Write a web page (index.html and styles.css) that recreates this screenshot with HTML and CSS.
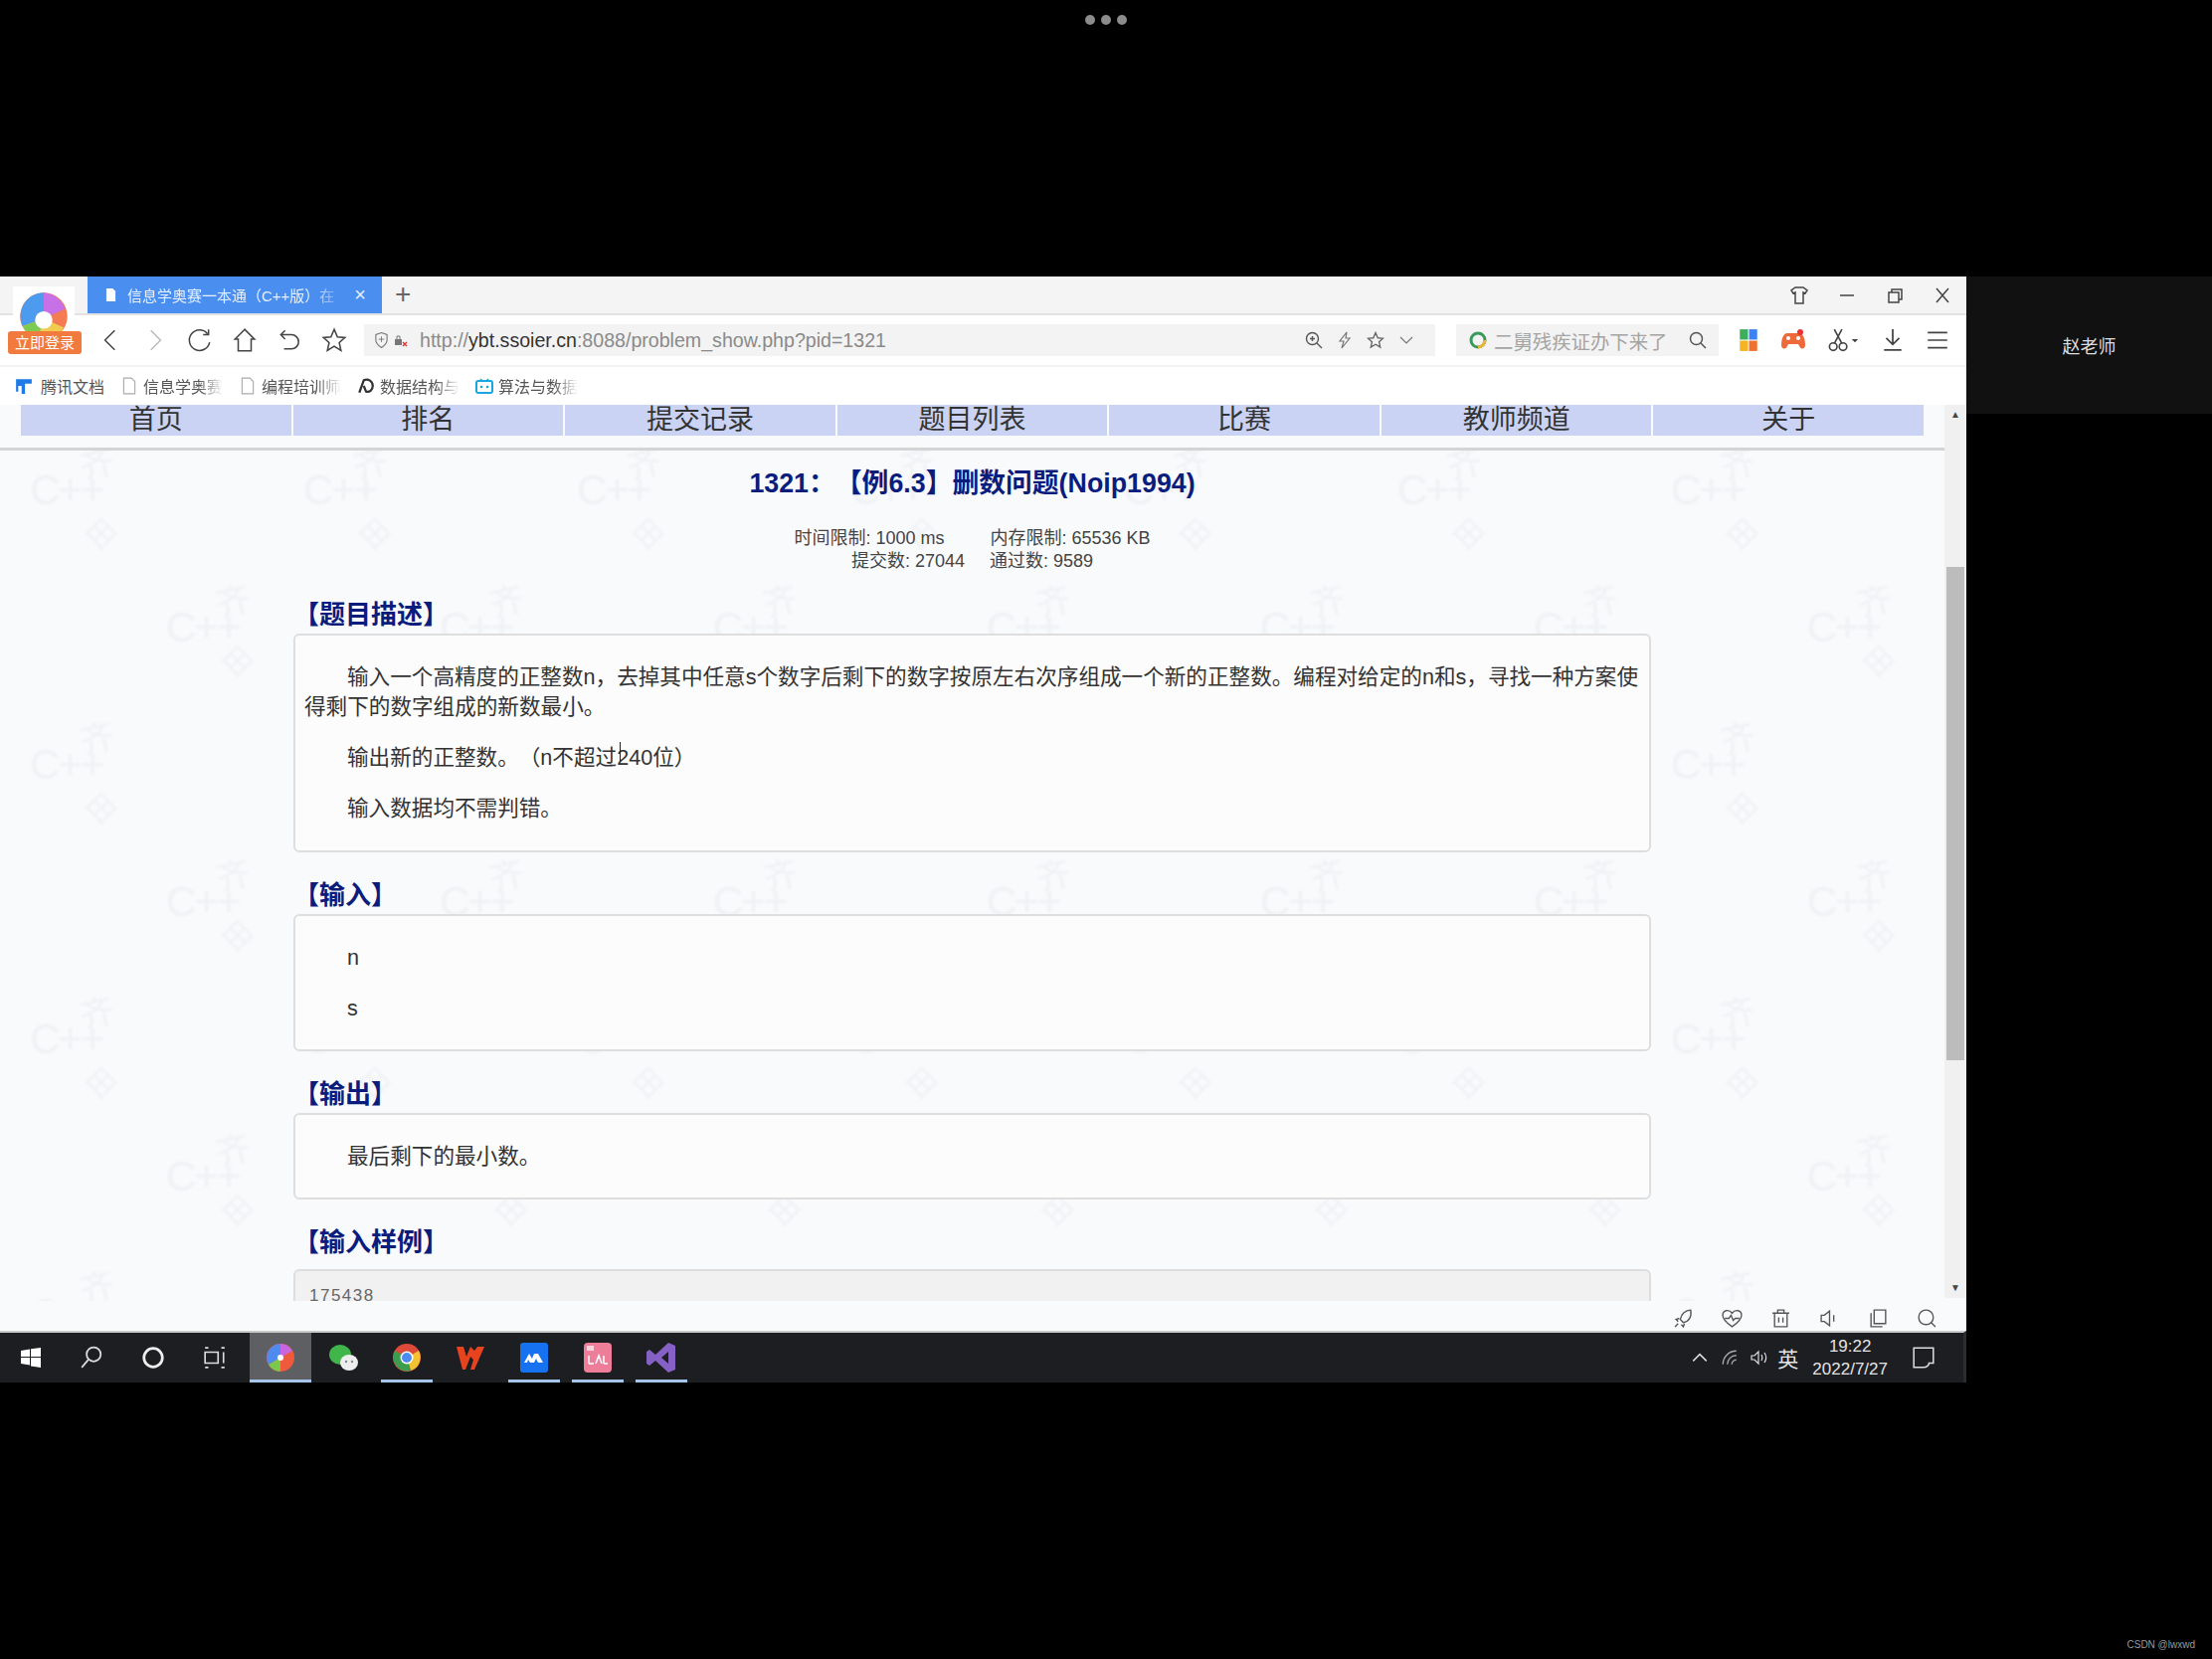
FILE: index.html
```html
<!DOCTYPE html>
<html>
<head>
    <title>1321 删数问题</title>
    <meta charset="UTF-8">
    <link rel="stylesheet" href="styles.css">
</head>
<body>
    <div class="dots"><span></span><span></span><span></span></div>

    <div class="share">
        <div class="window">
            <div class="tabbar">
                <div class="logo-space"></div>
                <div class="tab">
                    <svg class="tab-doc" viewBox="0 0 12 14"><path d="M1 0h7l3 3v11H1z" fill="#fff"/></svg>
                    <span class="tab-title">信息学奥赛一本通（C++版）在</span>
                    <span class="tab-close">×</span>
                </div>
                <span class="tab-new">+</span>
                <div class="win-btns">
                    <svg viewBox="0 0 20 20"><path d="M6 2h8l4 3-2 3-2-1v11H6V7L4 8 2 5z" fill="none" stroke="#444" stroke-width="1.5"/></svg>
                    <svg viewBox="0 0 20 20"><path d="M3 10h14" stroke="#444" stroke-width="1.5"/></svg>
                    <svg viewBox="0 0 20 20"><path d="M4 7h10v10H4zM7 7V4h10v10h-3" fill="none" stroke="#444" stroke-width="1.5"/></svg>
                    <svg viewBox="0 0 20 20"><path d="M4 3l12 14M16 3L4 17" stroke="#444" stroke-width="1.5"/></svg>
                </div>
            </div>

            <div class="toolbar">
                <svg class="tool" viewBox="0 0 24 24"><path d="M16 3L7 12l9 9" fill="none" stroke="#444" stroke-width="1.4"/></svg>
                <svg class="tool" viewBox="0 0 24 24"><path d="M8 3l9 9-9 9" fill="none" stroke="#bbb" stroke-width="1.4"/></svg>
                <svg class="tool" viewBox="0 0 24 24"><path d="M19 6a9.500 9.500 0 1 0 2 8M20 2v5h-5" fill="none" stroke="#444" stroke-width="1.400"/></svg>
                <svg class="tool" viewBox="0 0 24 24"><path d="M12 2L3 11h3v11h12V11h3z" fill="none" stroke="#444" stroke-width="1.400"/></svg>
                <svg class="tool" viewBox="0 0 24 24"><path d="M8 3L4 7l4 4M4 7h10a6.500 6.500 0 0 1 0 13H7" fill="none" stroke="#444" stroke-width="1.400"/></svg>
                <svg class="tool" viewBox="0 0 24 24"><path d="M12 2l3 7 7 .6-5.300 4.700 1.600 7.200L12 17.600 5.700 21.500l1.600-7.200L2 9.600 9 9z" fill="none" stroke="#444" stroke-width="1.400"/></svg>

                <div class="address">
                    <svg class="shield" viewBox="0 0 16 18"><path d="M8 1l6 2v6c0 4-3 6-6 8-3-2-6-4-6-8V3z" fill="none" stroke="#777" stroke-width="1.200"/><path d="M5 8h6M8 5v6" stroke="#777"/></svg>
                    <svg class="lock" viewBox="0 0 14 14"><path d="M1 6h7v6H1z" fill="#777"/><path d="M3 6V3h3v3" fill="none" stroke="#777"/><path d="M9 9l4 4M13 9l-4 4" stroke="#d33" stroke-width="1.400"/></svg>
                    <span class="url">http://<b>ybt.ssoier.cn</b>:8088/problem_show.php?pid=1321</span>
                    <div class="address-tools">
                        <svg viewBox="0 0 18 18"><circle cx="7.500" cy="7.500" r="6" fill="none" stroke="#555" stroke-width="1.400"/><path d="M12 12l5 5M5 7.500h5M7.500 5v5" stroke="#555" stroke-width="1.400"/></svg>
                        <svg viewBox="0 0 18 18"><path d="M11 1L4 10h4l-2 7 8-10h-4z" fill="none" stroke="#777" stroke-width="1.200"/></svg>
                        <svg viewBox="0 0 24 24"><path d="M12 2l3 7 7 .6-5.300 4.700 1.600 7.200L12 17.600 5.700 21.500l1.600-7.200L2 9.600 9 9z" fill="none" stroke="#666" stroke-width="1.800"/></svg>
                        <svg viewBox="0 0 18 18"><path d="M3 6l6 6 6-6" fill="none" stroke="#777" stroke-width="1.200"/></svg>
                    </div>
                </div>

                <div class="search">
                    <svg class="search-logo" viewBox="0 0 20 20"><circle cx="10" cy="10" r="7" fill="none" stroke="#3a9a5c" stroke-width="3"/><path d="M17 10a7 7 0 0 1-7 7" fill="none" stroke="#f2b632" stroke-width="3"/></svg>
                    <span class="search-text">二舅残疾证办下来了</span>
                    <svg class="search-icon" viewBox="0 0 18 18"><circle cx="7.500" cy="7.500" r="6" fill="none" stroke="#555" stroke-width="1.500"/><path d="M12 12l5 5" stroke="#555" stroke-width="1.500"/></svg>
                </div>

                <div class="extras">
                    <svg viewBox="0 0 22 22"><rect x="3" y="1" width="7.500" height="9.500" fill="#3fae5a"/><rect x="11.500" y="1" width="7.500" height="9.500" fill="#3b82f6"/><rect x="3" y="11.500" width="7.500" height="9.500" fill="#f5b423"/><rect x="11.500" y="11.500" width="7.500" height="9.500" fill="#f0702c"/></svg>
                    <svg viewBox="0 0 26 22"><path d="M7 4h12c4 0 6 6 6 12 0 4-4 5-6 1l-1-2H8l-1 2c-2 4-6 3-6-1C1 10 3 4 7 4z" fill="#ef6a3a"/><circle cx="20" cy="3" r="3" fill="#e33"/><circle cx="8" cy="9" r="2" fill="#fff"/><circle cx="18" cy="9" r="2" fill="#fff"/></svg>
                    <svg class="cut" viewBox="0 0 30 22"><circle cx="6" cy="17" r="3.500" fill="none" stroke="#444" stroke-width="1.500"/><circle cx="15" cy="17" r="3.500" fill="none" stroke="#444" stroke-width="1.500"/><path d="M7 14L14 1M14 14L7 1" stroke="#444" stroke-width="1.500"/><path d="M23 10h6l-3 3z" fill="#444"/></svg>
                    <svg viewBox="0 0 22 22"><path d="M11 1v14M5 9l6 6 6-6M3 20h16" fill="none" stroke="#444" stroke-width="1.600"/></svg>
                    <svg viewBox="0 0 22 22"><path d="M2 4h18M2 11h18M2 18h18" stroke="#444" stroke-width="1.600"/></svg>
                </div>
            </div>

            <div class="bookmarks">
                <div class="bookmark first">
                    <svg viewBox="0 0 16 16"><path d="M1 2h14v4H9v9H6V8H3v5H1z" fill="#1e7be6"/></svg>
                    <span>腾讯文档</span>
                </div>
                <div class="bookmark faded">
                    <svg viewBox="0 0 16 16"><path d="M3 1h7l3 3v11H3z" fill="none" stroke="#aaa"/></svg>
                    <span>信息学奥赛</span>
                </div>
                <div class="bookmark faded">
                    <svg viewBox="0 0 16 16"><path d="M3 1h7l3 3v11H3z" fill="none" stroke="#aaa"/></svg>
                    <span>编程培训师</span>
                </div>
                <div class="bookmark faded">
                    <svg viewBox="0 0 16 16"><path d="M2 14L6 3c4-2 8 1 8 5s-3 6-6 5L6 8" fill="none" stroke="#333" stroke-width="2"/></svg>
                    <span>数据结构与</span>
                </div>
                <div class="bookmark faded">
                    <svg viewBox="0 0 18 16"><rect x="1" y="3" width="16" height="12" rx="2" fill="none" stroke="#19a7e0" stroke-width="2"/><path d="M5 1l2 2M13 1l-2 2" stroke="#19a7e0" stroke-width="1.500"/><circle cx="6" cy="9" r="1.300" fill="#19a7e0"/><circle cx="12" cy="9" r="1.300" fill="#19a7e0"/></svg>
                    <span>算法与数据</span>
                </div>
            </div>

            <div class="page">
                <div class="page-main">
                    <svg class="watermark">
                        <defs>
                            <pattern id="wm" width="275" height="276" patternUnits="userSpaceOnUse">
                                <g class="wm-tile">
                                    <text x="30" y="100" class="wm-cpp">C++</text>
                                    <text x="80" y="72" class="wm-char" transform="rotate(-12 96 57)">齐</text>
                                    <text x="90" y="140" class="wm-knot" transform="rotate(45 103 127)">田</text>
                                </g>
                                <g class="wm-tile">
                                    <text x="167" y="238" class="wm-cpp">C++</text>
                                    <text x="217" y="210" class="wm-char" transform="rotate(-12 233 195)">齐</text>
                                    <text x="227" y="268" class="wm-knot" transform="rotate(45 240 255)">田</text>
                                </g>
                            </pattern>
                        </defs>
                        <rect width="100%" height="100%" fill="url(#wm)"/>
                    </svg>

                    <div class="page-content">
                        <div class="site-nav">
                            <a>首页</a>
                            <a>排名</a>
                            <a>提交记录</a>
                            <a>题目列表</a>
                            <a>比赛</a>
                            <a>教师频道</a>
                            <a>关于</a>
                        </div>
                        <div class="nav-rule"></div>

                        <h1 class="problem-title">1321：【例6.3】删数问题(Noip1994)</h1>
                        <div class="limits">
                            <div class="limit-row wide"><span>时间限制: 1000 ms</span><span>内存限制: 65536 KB</span></div>
                            <div class="limit-row"><span>提交数: 27044</span><span>通过数: 9589</span></div>
                        </div>

                        <div class="problem">
                            <h2>【题目描述】</h2>
                            <div class="box box-desc">
                                <p>输入一个高精度的正整数n，去掉其中任意s个数字后剩下的数字按原左右次序组成一个新的正整数。编程对给定的n和s，寻找一种方案使得剩下的数字组成的新数最小。</p>
                                <p>输出新的正整数。（n不超过<span class="caret-at">2</span>40位）</p>
                                <p>输入数据均不需判错。</p>
                            </div>

                            <h2>【输入】</h2>
                            <div class="box">
                                <p>n</p>
                                <p>s</p>
                            </div>

                            <h2>【输出】</h2>
                            <div class="box">
                                <p>最后剩下的最小数。</p>
                            </div>

                            <h2 class="sample-head">【输入样例】</h2>
                            <div class="box box-sample">175438</div>
                        </div>
                    </div>
                </div>

                <div class="scrollbar">
                    <span class="arrow">▲</span>
                    <div class="track"><div class="thumb"></div></div>
                    <span class="arrow">▼</span>
                </div>

                <div class="status-icons">
                    <svg viewBox="0 0 20 20"><path d="M17 2c-5 0-9 4-10 9l3 3c5-1 8-5 7-12zM6 10l-3 1 2 2M11 15l-1 3-2-2M5 15l-3 3" fill="none" stroke="#555" stroke-width="1.300"/></svg>
                    <svg viewBox="0 0 20 20"><path d="M10 18C4 14 1 10 1 7c0-5 6-6 9-2 3-4 9-3 9 2 0 3-3 7-9 11zM3 10h4l2-3 2 5 2-2h4" fill="none" stroke="#555" stroke-width="1.300"/></svg>
                    <svg viewBox="0 0 20 20"><path d="M4 5h12v13H4zM2 5h16M7 5V2h6v3M8 9v5M12 9v5" fill="none" stroke="#555" stroke-width="1.300"/></svg>
                    <svg viewBox="0 0 20 20"><path d="M2 7v6h3l5 4V3L5 7zM14 7v6" fill="none" stroke="#555" stroke-width="1.300"/></svg>
                    <svg viewBox="0 0 20 20"><path d="M6 2h11v13H6zM3 5v13h11" fill="none" stroke="#555" stroke-width="1.300"/></svg>
                    <svg viewBox="0 0 20 20"><circle cx="9" cy="9" r="7" fill="none" stroke="#555" stroke-width="1.300"/><path d="M14 14l4 4" stroke="#555" stroke-width="1.300"/></svg>
                </div>
            </div>

            <div class="taskbar">
                <svg class="start" viewBox="0 0 22 22"><path d="M1 4l9-1.500V10H1zM11 2.300L21 1v9H11zM1 11h9v7.500L1 17zM11 11h10v10l-10-1.500z" fill="#fff"/></svg>
                <svg class="task-tool" viewBox="0 0 22 22"><circle cx="13" cy="8" r="6.500" fill="none" stroke="#ddd" stroke-width="1.600"/><path d="M8 13l-6 7" stroke="#ddd" stroke-width="1.600"/></svg>
                <svg class="task-tool" viewBox="0 0 22 22"><circle cx="11" cy="11" r="8.500" fill="none" stroke="#eee" stroke-width="2.500"/></svg>
                <svg class="task-tool" viewBox="0 0 22 22"><path d="M2 2h3M17 2h3M2 20h3M17 20h3M2 6h12v10H2zM19 6v10" fill="none" stroke="#ddd" stroke-width="1.500"/></svg>

                <div class="task-app active">
                    <svg viewBox="0 0 32 32"><circle cx="16" cy="16" r="14" fill="#f05a3c"/><path d="M16 2a14 14 0 0 0-12 21l12-7z" fill="#4d8bf0"/><path d="M16 2a14 14 0 0 1 12 7L16 16z" fill="#c766e0"/><path d="M4 23a14 14 0 0 0 12 7v-14z" fill="#7cc84c"/><circle cx="16" cy="16" r="3" fill="#fff"/></svg>
                </div>
                <div class="task-app">
                    <svg viewBox="0 0 32 32"><ellipse cx="13" cy="13" rx="11" ry="10" fill="#3fb54a"/><ellipse cx="22" cy="21" rx="9" ry="8" fill="#eee"/><circle cx="19" cy="20" r="1.200" fill="#888"/><circle cx="25" cy="20" r="1.200" fill="#888"/></svg>
                </div>
                <div class="task-app open">
                    <svg viewBox="0 0 32 32"><circle cx="16" cy="16" r="14" fill="#dd4a3a"/><path d="M16 16L28 9a14 14 0 0 1-8 20z" fill="#f2c230"/><path d="M16 16L4 9a14 14 0 0 0 16 20z" fill="#3c9d4e"/><circle cx="16" cy="16" r="6.500" fill="#fff"/><circle cx="16" cy="16" r="5" fill="#4d8bf0"/></svg>
                </div>
                <div class="task-app">
                    <svg viewBox="0 0 32 32"><path d="M2 5l7 0 3 10 4-10 4 4 3-4h7L20 28h-4l3-10-3-3-5 13H8z" fill="#e8431f"/></svg>
                </div>
                <div class="task-app open">
                    <svg viewBox="0 0 32 32"><rect x="2" y="1" width="28" height="30" rx="3" fill="#1672f0"/><path d="M6 21l5-9 3 5 2-5 4 0 5 9h-5l-2-4-2 4h-4l-2-3-1 3z" fill="#fff"/></svg>
                </div>
                <div class="task-app open">
                    <svg viewBox="0 0 32 32"><rect x="2" y="1" width="28" height="30" rx="4" fill="#ee7d9a"/><path d="M7 22v-8M7 22h5M14 22l3-8 3 8M22 22v-8M22 22h4" fill="none" stroke="#fff" stroke-width="1.500"/><rect x="5" y="4" width="7" height="5" fill="#fbd3dc"/></svg>
                </div>
                <div class="task-app open">
                    <svg viewBox="0 0 32 32"><path d="M23 1l7 3v24l-7 3L10 19l-6 5-3-2V10l3-2 6 5zM23 10l-7 6 7 6z" fill="#8661c5" fill-rule="evenodd"/></svg>
                </div>

                <div class="tray">
                    <svg viewBox="0 0 16 16"><path d="M2 11l6-6 6 6" fill="none" stroke="#ddd" stroke-width="1.300"/></svg>
                    <svg viewBox="0 0 16 16"><path d="M2 14A12 12 0 0 1 14 2M6 14A8 8 0 0 1 14 6M10 14a4 4 0 0 1 4-4" fill="none" stroke="#aaa" stroke-width="1.200"/></svg>
                    <svg viewBox="0 0 18 16"><path d="M1 6v4h3l4 4V2L4 6zM11 5c1 2 1 4 0 6M14 3c2 3 2 7 0 10" fill="none" stroke="#ddd" stroke-width="1.200"/></svg>
                    <span class="ime">英</span>
                    <div class="clock"><div>19:22</div><div>2022/7/27</div></div>
                    <svg class="notify" viewBox="0 0 22 22"><path d="M2 2h18v14h-4c0 2-2 4-5 4H2z" fill="none" stroke="#ddd" stroke-width="1.400"/></svg>
                </div>
            </div>

            <div class="app-logo">
                <div class="logo-plate">
                    <svg viewBox="0 0 40 40"><circle cx="20" cy="20" r="19" fill="#f47b52"/><path d="M20 1A19 19 0 0 0 3 28l17-6z" fill="#4d9bee"/><path d="M20 1a19 19 0 0 1 17 13L20 22z" fill="#c870e8"/><path d="M3 28a19 19 0 0 0 17 11c8 0 13-4 16-10L20 22z" fill="#f0cc50"/><path d="M3 28a19 19 0 0 0 12 10l5-16z" fill="#7ccb52"/><circle cx="20" cy="23" r="7" fill="#fff"/></svg>
                </div>
                <span class="login-badge">立即登录</span>
            </div>
        </div>

        <div class="speaker">赵老师</div>
    </div>

    <div class="credit">CSDN @lwxwd</div>
</body>
</html>
```

FILE: styles.css
```css
body {
    margin: 0;
    width: 2224px;
    height: 1668px;
    background-color: #000;
    font-family: "Liberation Sans", "Noto Sans CJK SC", sans-serif;
    text-spacing-trim: space-all;
    position: relative;
    overflow: hidden;
}
svg {
    display: block;
    flex: none;
}

/* top dots */
.dots {
    height: 278px;
    display: flex;
    justify-content: center;
    gap: 6px;
    padding-top: 15px;
    box-sizing: border-box;
}
.dots span {
    width: 10px;
    height: 10px;
    border-radius: 50%;
    background-color: #8c8c8c;
}

/* shared screen */
.share {
    display: flex;
    align-items: flex-start;
}
.window {
    width: 1977px;
    height: 1112px;
    flex: none;
    display: flex;
    flex-direction: column;
    position: relative;
    background-color: #fff;
}
.speaker {
    flex: 1;
    height: 138px;
    background-color: #111;
    color: #ddd;
    font-size: 18px;
    display: flex;
    align-items: center;
    justify-content: center;
}

/* tabs */
.tabbar {
    height: 39px;
    flex: none;
    display: flex;
    align-items: stretch;
    background-color: #f4f4f4;
    border-bottom: 2px solid #e2e2e2;
    box-sizing: border-box;
}
.logo-space {
    width: 88px;
}
.tab {
    width: 296px;
    background-color: #4a8ef0;
    color: #e8f0fc;
    display: flex;
    align-items: center;
    padding: 0 16px 0 18px;
    box-sizing: border-box;
    font-size: 15px;
}
.tab-doc {
    width: 11px;
    height: 13px;
    margin-right: 11px;
}
.tab-title {
    flex: 1;
    white-space: nowrap;
    overflow: hidden;
    -webkit-mask-image: linear-gradient(90deg, #000 82%, transparent);
    mask-image: linear-gradient(90deg, #000 82%, transparent);
}
.tab-close {
    font-size: 20px;
    margin-left: 6px;
}
.tab-new {
    font-size: 28px;
    color: #666;
    line-height: 36px;
    margin-left: 13px;
    font-weight: 300;
}
.win-btns {
    margin-left: auto;
    display: flex;
    align-items: center;
    gap: 28px;
    padding-right: 14px;
}
.win-btns svg {
    width: 20px;
    height: 20px;
}

/* toolbar */
.toolbar {
    height: 52px;
    flex: none;
    display: flex;
    align-items: center;
    background-color: #fff;
    border-bottom: 2px solid #f3f3f3;
    padding-left: 98px;
    box-sizing: border-box;
}
.tool {
    width: 26px;
    height: 26px;
    margin-right: 19px;
}
.address {
    width: 1077px;
    height: 32px;
    margin-left: -2px;
    background-color: #f3f3f3;
    display: flex;
    align-items: center;
    padding-left: 10px;
    box-sizing: border-box;
}
.shield {
    width: 15px;
    height: 18px;
    margin-right: 5px;
}
.lock {
    width: 14px;
    height: 14px;
    margin-right: 12px;
}
.url {
    font-size: 19.600px;
    color: #8a8a8a;
    white-space: nowrap;
}
.url b {
    color: #333;
    font-weight: normal;
}
.address-tools {
    margin-left: auto;
    display: flex;
    align-items: center;
    gap: 13px;
    padding-right: 20px;
}
.address-tools svg {
    width: 18px;
    height: 18px;
}
.search {
    width: 264px;
    height: 32px;
    margin-left: 21px;
    background-color: #f3f3f3;
    display: flex;
    align-items: center;
    padding: 0 12px 0 12px;
    box-sizing: border-box;
}
.search-logo {
    width: 20px;
    height: 20px;
    margin-right: 6px;
}
.search-text {
    font-size: 19.400px;
    color: #a4a4a4;
    white-space: nowrap;
}
.search-icon {
    width: 18px;
    height: 18px;
    margin-left: auto;
}
.extras {
    display: flex;
    align-items: center;
    gap: 19px;
    margin-left: 17px;
}
.extras svg {
    width: 26px;
    height: 24px;
}
.extras .cut {
    width: 36px;
}

/* bookmarks */
.bookmarks {
    height: 38px;
    flex: none;
    display: flex;
    align-items: center;
    gap: 16px;
    padding-left: 15px;
    font-size: 16px;
    color: #555;
    background-color: #fff;
}
.bookmark {
    display: flex;
    align-items: center;
    gap: 5px;
}
.bookmark.first {
    gap: 8px;
}
.bookmark svg {
    width: 18px;
    height: 18px;
}
.bookmark.faded span {
    -webkit-mask-image: linear-gradient(90deg, #000 70%, transparent);
    mask-image: linear-gradient(90deg, #000 70%, transparent);
}

/* page */
.page {
    flex: 1;
    display: flex;
    min-height: 0;
    background-color: #f8fafc;
    position: relative;
}
.page-main {
    flex: 1;
    min-width: 0;
    position: relative;
    overflow: hidden;
}
.watermark {
    position: absolute;
    left: 0;
    top: 0;
    width: 100%;
    height: 100%;
    filter: blur(0.8px);
}
.wm-tile text {
    fill: #eff1f4;
}
.wm-cpp {
    font-size: 42px;
    letter-spacing: -2px;
    font-weight: 300;
}
.wm-char {
    font-size: 34px;
}
.wm-knot {
    font-size: 28px;
}
.page-content {
    position: relative;
}
.site-nav {
    display: flex;
    margin: 0 21px;
    height: 31px;
    gap: 2px;
}
.site-nav a {
    flex: 1;
    text-align: center;
    font-size: 27px;
    line-height: 31px;
    color: #333;
    background-color: #cad3f3;
}
.nav-rule {
    height: 3px;
    background-color: #d4d4d4;
    margin-top: 12px;
}
.problem-title {
    margin: 13px 0 0;
    text-align: center;
    font-size: 26.800px;
    line-height: 40px;
    color: #0a1c7c;
}
.limits {
    margin-top: 24px;
    text-align: center;
    font-size: 18px;
    line-height: 23px;
    color: #444;
}
.limit-row span + span {
    margin-left: 25px;
}
.limit-row.wide span + span {
    margin-left: 46px;
}
.problem {
    margin: 25px 295px 0 295px;
}
.problem h2 {
    margin: 0 0 2px;
    font-size: 26px;
    line-height: 34px;
    color: #0a1c7c;
}
.problem .sample-head {
    margin-bottom: 10px;
}
.box {
    background-color: #fcfcfc;
    border: 2px solid #dedede;
    border-radius: 6px;
    padding: 27px 4px 26px 9px;
    margin-bottom: 26px;
    font-size: 21.600px;
    line-height: 30px;
    color: #333;
}
.box p {
    margin: 0 0 21px;
    text-indent: 43px;
}
.box p:last-child {
    margin-bottom: 0;
}
.box-desc {
    padding-bottom: 27px;
}
.box-sample {
    background-color: #f1f1f1;
    color: #666;
    font-size: 17px;
    line-height: 22px;
    letter-spacing: 1.500px;
    height: 140px;
    padding: 14px 14px 0;
    margin-bottom: 0;
}
.caret-at {
    position: relative;
}
.caret-at::after {
    content: "";
    position: absolute;
    left: 3px;
    top: -3px;
    width: 1px;
    height: 20px;
    background-color: #222;
}
.status-icons {
    position: absolute;
    left: 0;
    right: 0;
    bottom: 0;
    height: 30px;
    background-color: #f8fafc;
    display: flex;
    justify-content: flex-end;
    align-items: center;
    gap: 28px;
    padding: 4px 29px 0 0;
    box-sizing: border-box;
}
.status-icons svg {
    width: 21px;
    height: 21px;
}
.scrollbar {
    width: 22px;
    flex: none;
    display: flex;
    flex-direction: column;
    background-color: #f0f0f0;
    height: 898px;
}
.arrow {
    height: 20px;
    font-size: 10px;
    line-height: 20px;
    text-align: center;
    color: #444;
}
.track {
    flex: 1;
    padding-top: 143px;
}
.thumb {
    width: 18px;
    margin-left: 2px;
    height: 496px;
    background-color: #bcbcbc;
}

/* taskbar */
.taskbar {
    height: 52px;
    flex: none;
    display: flex;
    align-items: center;
    background-color: #1d1e22;
    border-top: 2px solid #c9c9c9;
    border-right: 3px solid #2c2d31;
    box-sizing: border-box;
}
.start {
    width: 22px;
    height: 22px;
    margin-left: 20px;
}
.task-tool {
    width: 24px;
    height: 24px;
    margin-left: 38px;
}
.task-app {
    width: 64px;
    height: 50px;
    display: flex;
    align-items: center;
    justify-content: center;
    position: relative;
}
.task-app svg {
    width: 32px;
    height: 32px;
}
.task-app.active {
    width: 62px;
    margin-left: 23px;
    background-color: #5e5f62;
}
.task-app.open::after,
.task-app.active::after {
    content: "";
    position: absolute;
    bottom: 0;
    left: 6px;
    right: 6px;
    height: 3px;
    background-color: #a7c4ea;
}
.task-app.active::after {
    left: 0;
    right: 0;
}
.tray {
    margin-left: auto;
    display: flex;
    align-items: center;
    color: #e4e4e4;
    padding-right: 28px;
}
.tray svg {
    width: 18px;
    height: 18px;
    margin-right: 12px;
}
.ime {
    font-size: 21px;
    margin: 0 3px 0 -3px;
}
.clock {
    margin: 0 24px 0 11px;
    font-size: 17px;
    line-height: 23px;
    text-align: center;
}
.tray .notify {
    width: 24px;
    height: 24px;
    margin-right: 0;
}

/* browser logo overlaps tab bar and toolbar */
.app-logo {
    position: absolute;
    left: 8px;
    top: 10px;
    width: 74px;
    height: 68px;
}
.logo-plate {
    width: 62px;
    height: 50px;
    margin-left: 5px;
    background-color: #fff;
    padding: 5px 0 0 6px;
    box-sizing: border-box;
}
.logo-plate svg {
    width: 50px;
    height: 50px;
}
.login-badge {
    position: absolute;
    left: 0;
    bottom: 0;
    width: 74px;
    height: 23px;
    background-color: #f17b3e;
    color: #fff;
    font-size: 15px;
    line-height: 23px;
    text-align: center;
    border-radius: 3px;
}

.credit {
    position: absolute;
    right: 17px;
    bottom: 9px;
    color: #9a9a9a;
    font-size: 10px;
}
```
